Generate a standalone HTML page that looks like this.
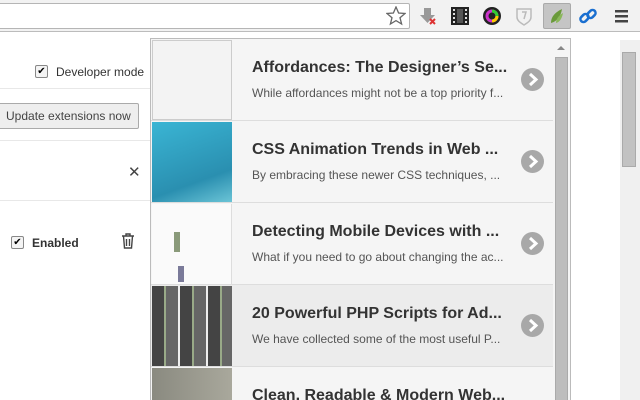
<!DOCTYPE html>
<html><head><style>
*{margin:0;padding:0;box-sizing:border-box}
html,body{width:640px;height:400px;overflow:hidden}
body{background:#fff;font-family:"Liberation Sans",Arial,sans-serif;position:relative}
.tb{position:absolute;left:0;top:0;width:640px;height:32px;background:#f2f2f2;border-bottom:1px solid #bcbcbc}
.url{position:absolute;left:-2px;top:3px;width:412px;height:26px;background:#fff;border:1px solid #b5b5b5;border-radius:2px}
.ico{position:absolute;top:6px;width:20px;height:20px}
.pg{position:absolute;font-size:12px;color:#333;white-space:nowrap}
.pop{position:absolute;left:150px;top:38px;width:421px;height:362px;background:#f5f5f5;border:1px solid #bbb;border-bottom:none;overflow:hidden}
.row{position:absolute;left:0;width:402px;height:82px;border-bottom:1px solid #ddd}
.th{position:absolute;left:1px;top:1px;width:80px;height:80px}
.t{position:absolute;left:101px;top:20px;font-size:16px;font-weight:bold;color:#333;white-space:nowrap}
.d{position:absolute;left:101px;top:47px;font-size:12px;color:#555;white-space:nowrap}
.ar{position:absolute;left:370px;top:29px;width:23px;height:23px;border-radius:50%;background:#a8a8a8}
.ar svg{position:absolute;left:0;top:0}
</style></head><body>
<div class="tb">
<div class="url"></div>
<svg class="ico" style="left:386px" viewBox="0 0 20 20"><polygon points="10,1 12.6,7 19,7.5 14,11.7 15.6,18 10,14.6 4.4,18 6,11.7 1,7.5 7.4,7" fill="none" stroke="#666" stroke-width="1.3"/></svg>
<svg class="ico" style="left:418px" viewBox="0 0 20 20"><path d="M6 2h7v7h4l-7.5 8L2 9h4z" fill="#999"/><path d="M12 13l5 5M17 13l-5 5" stroke="#d33" stroke-width="2"/></svg>
<svg class="ico" style="left:450px" viewBox="0 0 20 20"><rect x="1" y="1" width="18" height="18" fill="#222"/><g fill="#ddd"><rect x="3" y="3" width="2" height="2"/><rect x="3" y="7" width="2" height="2"/><rect x="3" y="11" width="2" height="2"/><rect x="3" y="15" width="2" height="2"/><rect x="15" y="3" width="2" height="2"/><rect x="15" y="7" width="2" height="2"/><rect x="15" y="11" width="2" height="2"/><rect x="15" y="15" width="2" height="2"/></g><rect x="7" y="3" width="6" height="14" fill="#555"/></svg>
<svg class="ico" style="left:482px" viewBox="0 0 20 20"><circle cx="10" cy="10" r="9" fill="#222"/><circle cx="10" cy="10" r="5" fill="none" stroke="#c3c" stroke-width="3"/><path d="M10 5a5 5 0 0 1 5 5" stroke="#3c3" stroke-width="3" fill="none"/><path d="M15 10a5 5 0 0 1-5 5" stroke="#fc0" stroke-width="3" fill="none"/></svg>
<svg class="ico" style="left:514px" viewBox="0 0 20 20"><path d="M3 3h14v8c0 4-4 6-7 8-3-2-7-4-7-8z" fill="none" stroke="#bbb" stroke-width="1.5"/><path d="M8 6h4l-2 7" stroke="#bbb" stroke-width="1.5" fill="none"/></svg>
<div style="position:absolute;left:543px;top:3px;width:28px;height:26px;background:#c5c5c5;border:1px solid #aaa;border-radius:2px"></div>
<svg class="ico" style="left:547px" viewBox="0 0 20 20"><path d="M4 17C4 10 9 6 15 3c-1 6-4 12-11 14z" fill="#6a9a3a"/><path d="M9 17c0-4 3-8 7-10-1 5-3 9-7 10z" fill="#8ab85a"/></svg>
<svg class="ico" style="left:578px" viewBox="0 0 20 20"><g fill="none" stroke="#1a6fd0" stroke-width="2.5"><rect x="2" y="9" width="9" height="6" rx="3" transform="rotate(-45 6.5 12)"/><rect x="9" y="5" width="9" height="6" rx="3" transform="rotate(-45 13.5 8)"/></g></svg>
<svg class="ico" style="left:612px" viewBox="0 0 20 20"><g fill="#444"><rect x="3" y="4" width="13" height="2.5"/><rect x="3" y="9" width="13" height="2.5"/><rect x="3" y="14" width="13" height="2.5"/></g></svg>
</div>
<div style="position:absolute;left:0;top:88px;width:150px;height:1px;background:#e8e8e8"></div>
<div style="position:absolute;left:0;top:140px;width:150px;height:1px;background:#e8e8e8"></div>
<div style="position:absolute;left:0;top:200px;width:150px;height:1px;background:#e8e8e8"></div>
<div style="position:absolute;left:35px;top:65px;width:13px;height:13px;border:1px solid #888;border-radius:2px;background:#f4f4f4;font-size:10px;line-height:11px;text-align:center">✔</div>
<div class="pg" style="left:56px;top:65px">Developer mode</div>
<div style="position:absolute;left:-2px;top:103px;width:141px;height:26px;border:1px solid #aaa;border-radius:2px;background:#eee;font-size:12px;color:#444;padding:5px 0 0 7px;white-space:nowrap">Update extensions now</div>
<div class="pg" style="left:128px;top:163px;font-size:15px;color:#444">✕</div>
<div style="position:absolute;left:11px;top:236px;width:13px;height:13px;border:1px solid #888;border-radius:2px;background:#f4f4f4;font-size:10px;line-height:11px;text-align:center">✔</div>
<div class="pg" style="left:32px;top:236px;font-weight:bold">Enabled</div>
<svg style="position:absolute;left:121px;top:233px" width="14" height="16" viewBox="0 0 14 16"><path d="M1 3h12M5 3V1h4v2M2.5 3l1 12h7l1-12M5.5 6v7M8.5 6v7" stroke="#444" stroke-width="1.4" fill="none"/></svg>
<div style="position:absolute;left:620px;top:40px;width:20px;height:360px;background:#f0f0f0"></div>
<div style="position:absolute;left:622px;top:52px;width:14px;height:115px;background:#c2c2c2;border:1px solid #aaa"></div>
<div class="pop">
<div class="row" style="top:0"><div class="th" style="background:#f3f3f3;border:1px solid #ccc"></div><div class="t">Affordances: The Designer’s Se...</div><div class="d">While affordances might not be a top priority f...</div><div class="ar"><svg width="23" height="23"><path d="M9 6l6 5.5-6 5.5" stroke="#fff" stroke-width="3" fill="none"/></svg></div></div>
<div class="row" style="top:82px"><div class="th" style="background:linear-gradient(160deg,#3ab5d4,#2a8fb0 70%,#6bc4d6)"></div><div class="t">CSS Animation Trends in Web ...</div><div class="d">By embracing these newer CSS techniques, ...</div><div class="ar"><svg width="23" height="23"><path d="M9 6l6 5.5-6 5.5" stroke="#fff" stroke-width="3" fill="none"/></svg></div></div>
<div class="row" style="top:164px"><div class="th" style="background:#fafafa;border-right:1px solid #ddd"><div style="position:absolute;left:22px;top:28px;width:6px;height:20px;background:#8a9a7a"></div><div style="position:absolute;left:26px;top:62px;width:6px;height:16px;background:#7a7a99"></div></div><div class="t">Detecting Mobile Devices with ...</div><div class="d">What if you need to go about changing the ac...</div><div class="ar"><svg width="23" height="23"><path d="M9 6l6 5.5-6 5.5" stroke="#fff" stroke-width="3" fill="none"/></svg></div></div>
<div class="row" style="top:246px;background:#ececec"><div class="th" style="background:repeating-linear-gradient(90deg,#444 0 12px,#9a8 12px 14px,#666 14px 26px,#eee 26px 28px);"></div><div class="t">20 Powerful PHP Scripts for Ad...</div><div class="d">We have collected some of the most useful P...</div><div class="ar"><svg width="23" height="23"><path d="M9 6l6 5.5-6 5.5" stroke="#fff" stroke-width="3" fill="none"/></svg></div></div>
<div class="row" style="top:328px;height:34px;border-bottom:none"><div class="th" style="background:linear-gradient(90deg,#8a8a80,#a9a89c);height:33px"></div><div class="t">Clean, Readable &amp; Modern Web...</div></div>
<div style="position:absolute;left:402px;top:0;width:18px;height:362px;background:#f5f5f5"></div>
<div style="position:absolute;left:404px;top:18px;width:13px;height:344px;background:#bdbdbd;border:1px solid #aaa"></div>
<div style="position:absolute;left:406px;top:7px;width:0;height:0;border-left:4px solid transparent;border-right:4px solid transparent;border-bottom:4px solid #888"></div>
</div>
</body></html>
